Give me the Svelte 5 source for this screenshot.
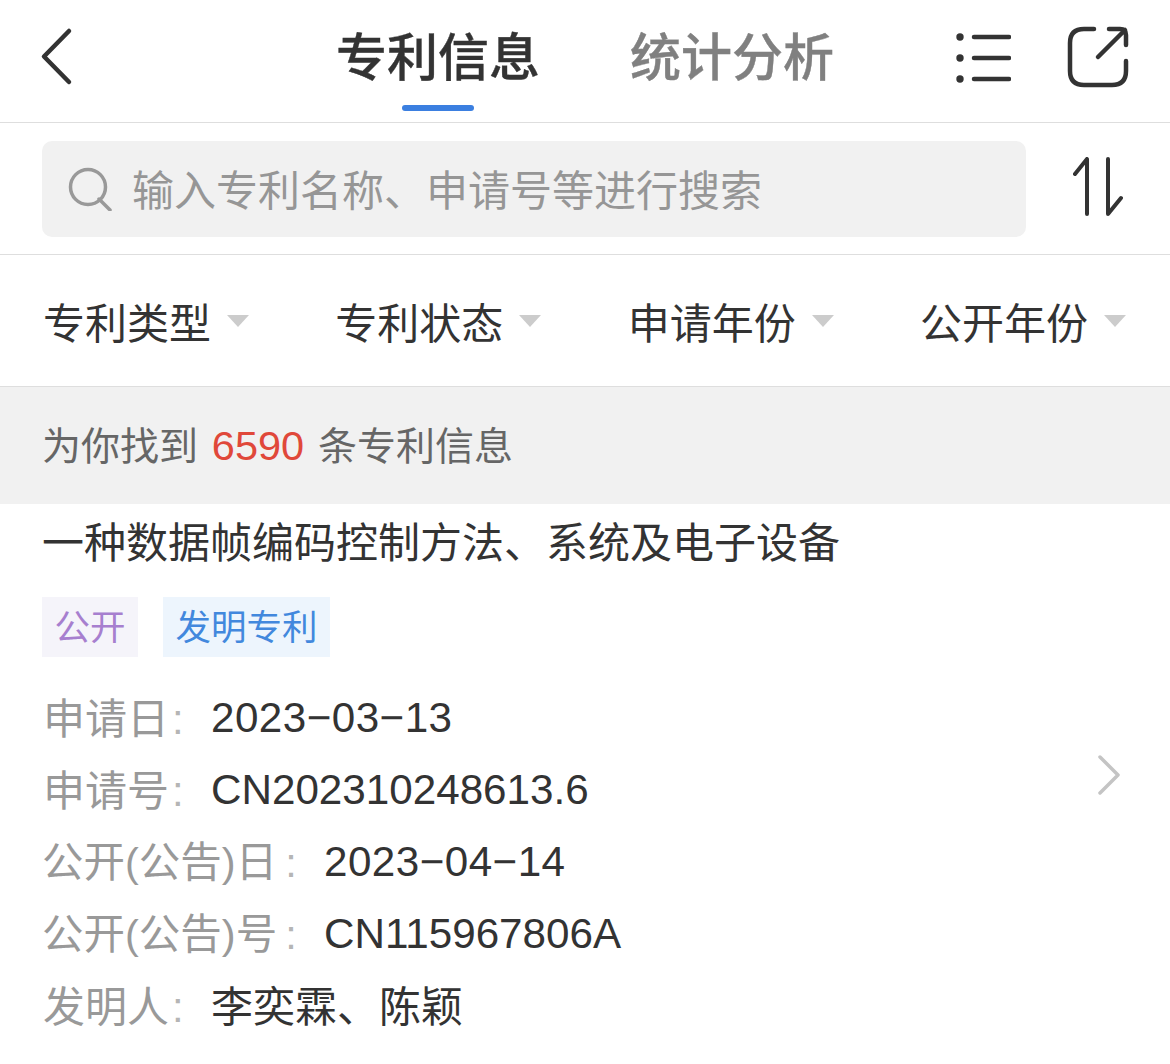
<script>
  const filters = ['专利类型', '专利状态', '申请年份', '公开年份'];

  const fields = [
    { label: '申请日', value: '2023−03−13', kind: 'date' },
    { label: '申请号', value: 'CN202310248613.6', kind: '' },
    { label: '公开(公告)日', value: '2023−04−14', kind: 'date', wide: true },
    { label: '公开(公告)号', value: 'CN115967806A', kind: '', wide: true },
    { label: '发明人', value: '李奕霖、陈颖', kind: 'cjk' }
  ];
</script>

<div class="page">
  <header class="topbar">
    <svg class="back" width="34" height="60" viewBox="0 0 34 60">
      <path d="M29 4 L4 29.500 L29 55" />
    </svg>
    <nav class="tabs">
      <div class="tab active">专利信息</div>
      <div class="tab">统计分析</div>
    </nav>
    <svg class="list-icon" width="56" height="52" viewBox="0 0 56 52">
      <circle cx="5" cy="6" r="3.700" />
      <circle cx="5" cy="27" r="3.700" />
      <circle cx="5" cy="48" r="3.700" />
      <path d="M19 6 H54 M19 27 H54 M19 48 H54" />
    </svg>
    <svg class="share-icon" width="62" height="62" viewBox="0 0 62 62">
      <path d="M27 3 H17 Q3 3 3 17 V45 Q3 59 17 59 H45 Q59 59 59 45 V35" />
      <path d="M31 31 L58 4 M42 3 H53 Q59 3 59 9 V19" />
    </svg>
  </header>

  <section class="search-row">
    <div class="search-box">
      <svg width="44" height="44" viewBox="0 0 44 44">
        <circle cx="20" cy="20" r="17.500" />
        <path d="M31 32 L42 43" />
      </svg>
      <span>输入专利名称、申请号等进行搜索</span>
    </div>
    <svg class="sort-icon" width="50" height="60" viewBox="0 0 50 60">
      <path d="M2 17 L14 2 V57" />
      <path d="M35 2 V57 L48 41" />
    </svg>
  </section>

  <section class="filters">
    {#each filters as name}
      <div class="filter">
        <span>{name}</span>
        <i class="caret"></i>
      </div>
    {/each}
  </section>

  <section class="count">为你找到 <em>6590</em> 条专利信息</section>

  <article class="card">
    <h2>一种数据帧编码控制方法、系统及电子设备</h2>
    <div class="tags">
      <span class="tag purple">公开</span>
      <span class="tag blue">发明专利</span>
    </div>
    <div class="fields">
      {#each fields as f}
        <div class="field" class:wide={f.wide}>
          <span class="label">{f.label}<b>:</b></span>
          <span class="value {f.kind}">{f.value}</span>
        </div>
      {/each}
    </div>
    <svg class="chevron" width="24" height="40" viewBox="0 0 24 40">
      <path d="M3 2 L21 20 L3 38" />
    </svg>
  </article>
</div>

<style>
  :global(body) {
    margin: 0;
    background: #fff;
  }

  .page {
    width: 1170px;
    height: 1064px;
    overflow: hidden;
    font-family: "Liberation Sans", "Noto Sans CJK SC", sans-serif;
    color: #333;
  }

  svg {
    display: block;
    flex: none;
    fill: none;
    stroke-linecap: round;
    stroke-linejoin: round;
  }

  .topbar {
    position: relative;
    height: 122px;
    border-bottom: 1px solid #dedede;
    display: flex;
    align-items: center;
    padding: 0 40px;
  }

  .back {
    stroke: #333;
    stroke-width: 4.500;
    margin-top: -8px;
  }

  .tabs {
    display: flex;
    gap: 90px;
    margin-left: 262px;
    margin-top: -4px;
  }

  .tab {
    position: relative;
    font-size: 51px;
    line-height: 60px;
    font-weight: 500;
    color: #808080;
    -webkit-text-stroke: 0.4px currentColor;
  }

  .tab.active {
    color: #333;
  }

  .tab.active::after {
    content: '';
    position: absolute;
    left: 66px;
    top: 76px;
    width: 72px;
    height: 6px;
    border-radius: 3px;
    background: #3b7fe0;
  }

  .list-icon {
    margin-left: 121px;
    margin-top: -8px;
    fill: #333;
  }

  .list-icon circle {
    stroke: none;
  }

  .list-icon path {
    stroke: #333;
    stroke-width: 4.500;
    fill: none;
  }

  .share-icon {
    margin-left: 56px;
    margin-top: -8px;
    stroke: #333;
    stroke-width: 4.500;
  }

  .search-row {
    height: 132px;
    border-bottom: 1px solid #dedede;
    display: flex;
    align-items: center;
    justify-content: space-between;
    padding: 1px 47px 0 42px;
    box-sizing: border-box;
  }

  .search-box {
    width: 984px;
    height: 96px;
    background: #f1f1f1;
    border-radius: 10px;
    display: flex;
    align-items: center;
    gap: 20px;
    padding-left: 26px;
    box-sizing: border-box;
    font-size: 42px;
    color: #969696;
  }

  .search-box span {
    padding-bottom: 4px;
  }

  .search-box svg {
    stroke: #999;
    stroke-width: 3.500;
  }

  .sort-icon {
    stroke: #333;
    stroke-width: 4;
    margin-bottom: 4px;
  }

  .filters {
    height: 132px;
    border-bottom: 1px solid #dedede;
    box-sizing: border-box;
    display: flex;
    justify-content: space-between;
    align-items: center;
    padding: 0 44px 0 43px;
  }

  .filter {
    display: flex;
    align-items: center;
    gap: 16px;
    font-size: 42px;
    color: #333;
  }

  .caret {
    width: 0;
    height: 0;
    border-left: 11px solid transparent;
    border-right: 11px solid transparent;
    border-top: 12px solid #cccccc;
  }

  .count {
    height: 117px;
    background: #f1f1f1;
    display: flex;
    align-items: center;
    padding: 0 0 5px 42px;
    box-sizing: border-box;
    font-size: 39px;
    color: #666;
    white-space: pre;
  }

  .count em {
    font-style: normal;
    font-size: 41.500px;
    color: #e0483a;
    margin: 0 3px;
    padding-top: 5px;
  }

  .card {
    position: relative;
    padding: 10px 42px 0;
  }

  h2 {
    margin: 0;
    font-size: 42px;
    line-height: 60px;
    font-weight: 400;
    color: #333;
  }

  .tags {
    display: flex;
    gap: 25px;
    margin-top: 23px;
  }

  .tag {
    height: 60px;
    line-height: 63px;
    padding: 0 12.500px;
    font-size: 35.500px;
  }

  .purple {
    background: #f5f4fa;
    color: #a77fcf;
  }

  .blue {
    background: #edf5fd;
    color: #4288dd;
  }

  .fields {
    margin-top: 25px;
  }

  .field {
    display: flex;
    height: 72px;
    align-items: center;
  }

  .label {
    width: 169px;
    font-size: 42px;
    color: #999;
    padding: 0 0 6px 1px;
    box-sizing: border-box;
    white-space: nowrap;
  }

  .label b {
    font-weight: 400;
    margin-left: 3px;
    color: #b5b5b5;
  }

  .field.wide .label {
    width: 282px;
    font-size: 41.500px;
    padding-left: 0;
  }

  .field.wide .label b {
    margin-left: 8px;
  }

  .value {
    font-size: 42.200px;
    color: #333;
  }

  .value.date {
    letter-spacing: 0.450px;
  }

  .value.cjk {
    font-size: 42px;
    padding-bottom: 6px;
  }

  .chevron {
    position: absolute;
    left: 1097px;
    top: 251px;
    stroke: #c4c4c4;
    stroke-width: 3.500;
  }
</style>
